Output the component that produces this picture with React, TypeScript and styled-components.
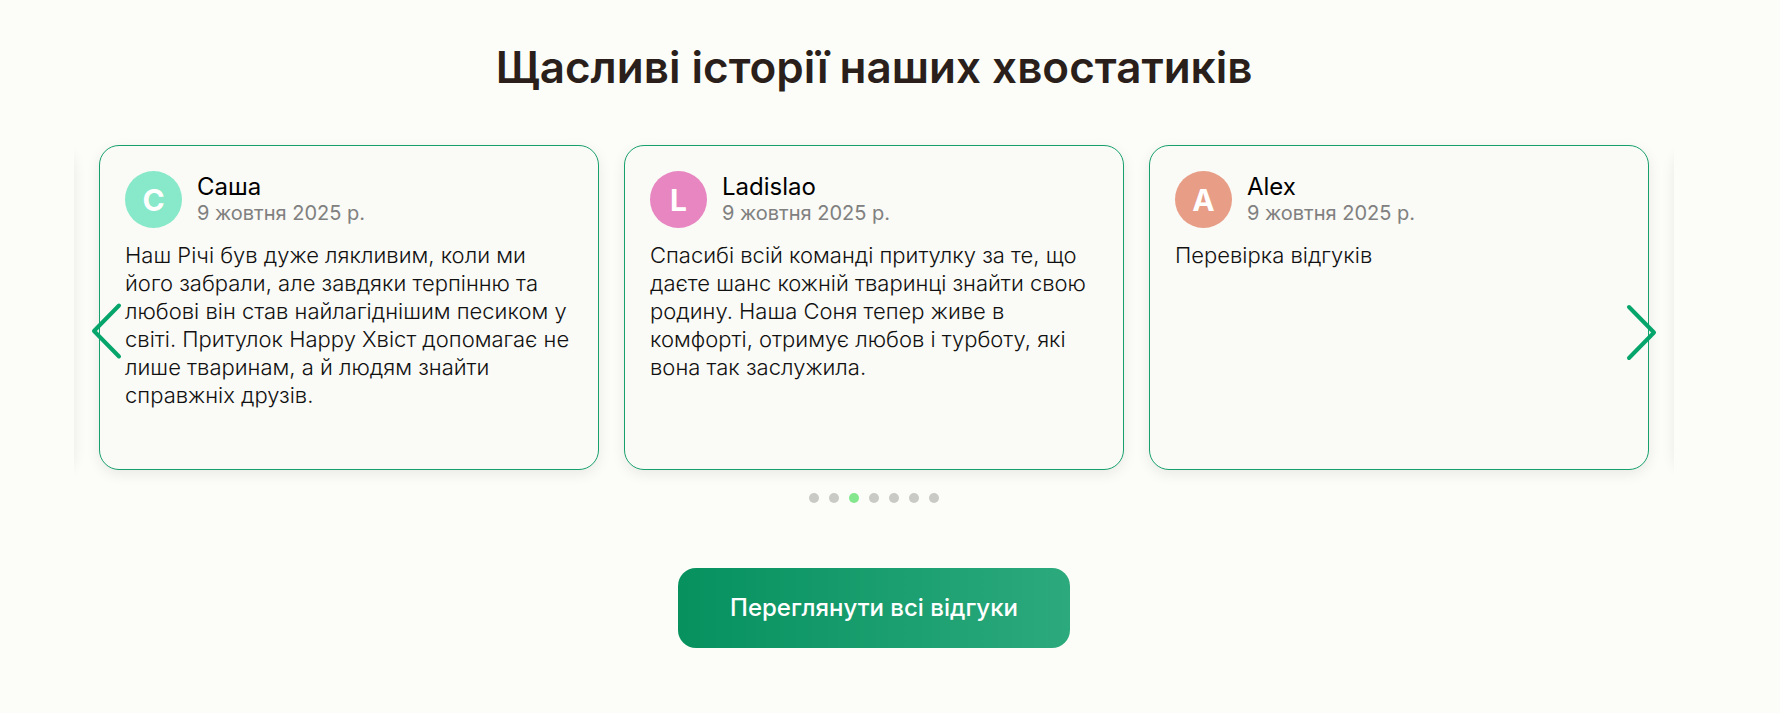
import React from "react";
import styled, { createGlobalStyle } from "styled-components";

const GlobalStyle = createGlobalStyle`
  *, *::before, *::after { box-sizing: border-box; }
  body {
    margin: 0;
    background: #fcfdf8;
    color: #000;
    font-family: Inter, "Noto Sans", sans-serif;
  }
`;

const Section = styled.section`
  display: flex;
  flex-direction: column;
  align-items: center;
  padding: 39px 106px 64px 74px;
`;

const Title = styled.h2`
  margin: 0;
  font-size: 44px;
  line-height: 56px;
  font-weight: 600;
  color: #2a1f1b;
  text-align: center;
`;

const Slider = styled.div`
  position: relative;
  width: 100%;
  max-width: 1600px;
  margin-top: 25px;
  padding-bottom: 40px;
`;

const Track = styled.ul`
  display: flex;
  justify-content: center;
  gap: 25px;
  margin: 0;
  padding: 25px 25px 23px;
  overflow: hidden;
  list-style: none;
`;

const Card = styled.li`
  flex: 0 0 calc((100% - 50px) / 3);
  min-height: 325px;
  padding: 25px;
  border: 1px solid #16a06c;
  border-radius: 20px;
  background: #fafaf6;
  box-shadow: 0 4px 14px rgba(0, 0, 0, 0.08);
`;

const Author = styled.div`
  display: flex;
  align-items: center;
  gap: 15px;
`;

const Avatar = styled.span<{ $color: string }>`
  display: flex;
  align-items: center;
  justify-content: center;
  flex: none;
  width: 57px;
  height: 57px;
  border-radius: 50%;
  background: ${(p) => p.$color};
  color: #fff;
  font-size: 30px;
  font-weight: 700;
`;

const Name = styled.h3`
  margin: 0;
  font-size: 24px;
  line-height: 28px;
  font-weight: 400;
`;

const DateText = styled.time`
  display: block;
  font-size: 20px;
  line-height: 24px;
  padding-bottom: 2px;
  color: #808080;
`;

const Story = styled.p`
  margin: 13px 0 0;
  font-size: 22px;
  line-height: 28px;
  font-weight: 300;
  color: #111;
  white-space: pre-line;
`;

const Arrow = styled.button<{ $side: "left" | "right" }>`
  position: absolute;
  top: 50%;
  ${(p) => p.$side}: 16px;
  transform: translateY(-50%);
  padding: 0;
  border: 0;
  background: none;
  cursor: pointer;

  svg { display: block; }
`;

const Dots = styled.div`
  display: flex;
  justify-content: center;
  gap: 10px;
`;

const Dot = styled.button<{ $active: boolean }>`
  width: 10px;
  height: 10px;
  padding: 0;
  border: 0;
  border-radius: 50%;
  background: ${(p) => (p.$active ? "#84e78d" : "#c9cac6")};
  cursor: pointer;
`;

const AllButton = styled.button`
  min-height: 80px;
  margin-top: 25px;
  padding: 0 52px 2px;
  border: 0;
  border-radius: 18px;
  background: linear-gradient(90deg, #06915f, #2caa7d);
  color: #fff;
  font-family: inherit;
  font-size: 24px;
  font-weight: 500;
  cursor: pointer;
`;

const reviews = [
  {
    name: "Саша",
    initial: "С",
    color: "#87e9c9",
    text: "Наш Річі був дуже лякливим, коли ми\nйого забрали, але завдяки терпінню та\nлюбові він став найлагіднішим песиком у\nсвіті. Притулок Happy Хвіст допомагає не\nлише тваринам, а й людям знайти\nсправжніх друзів.",
  },
  {
    name: "Ladislao",
    initial: "L",
    color: "#e786c1",
    text: "Спасибі всій команді притулку за те, що\nдаєте шанс кожній тваринці знайти свою\nродину. Наша Соня тепер живе в\nкомфорті, отримує любов і турботу, які\nвона так заслужила.",
  },
  {
    name: "Alex",
    initial: "A",
    color: "#e79d86",
    text: "Перевірка відгуків",
  },
];

const dots = [0, 1, 2, 3, 4, 5, 6];

export default function App() {
  const [active, setActive] = React.useState(2);
  const move = (step: number) =>
    setActive((active + step + dots.length) % dots.length);

  return (
    <>
      <GlobalStyle />
      <Section>
        <Title>Щасливі історії наших хвостатиків</Title>
        <Slider>
          <Track>
            <Card aria-hidden="true" />
            {reviews.map((r) => (
              <Card key={r.name}>
                <Author>
                  <Avatar $color={r.color}>{r.initial}</Avatar>
                  <div>
                    <Name>{r.name}</Name>
                    <DateText dateTime="2025-10-09">9 жовтня 2025 р.</DateText>
                  </div>
                </Author>
                <Story>{r.text}</Story>
              </Card>
            ))}
            <Card aria-hidden="true" />
          </Track>
          <Dots>
            {dots.map((i) => (
              <Dot key={i} type="button" $active={i === active} onClick={() => setActive(i)} />
            ))}
          </Dots>
          <Arrow type="button" $side="left" onClick={() => move(-1)}>
            <svg width="32" height="60" viewBox="0 0 32 60" fill="none" stroke="#06a56c" strokeWidth="4" strokeLinecap="round" strokeLinejoin="round">
              <path d="M29 3.5 L4 29 L29 54.5" />
            </svg>
          </Arrow>
          <Arrow type="button" $side="right" onClick={() => move(1)}>
            <svg width="32" height="60" viewBox="0 0 32 60" fill="none" stroke="#06a56c" strokeWidth="4" strokeLinecap="round" strokeLinejoin="round">
              <path d="M3 5 L28 30.5 L3 56" />
            </svg>
          </Arrow>
        </Slider>
        <AllButton type="button">Переглянути всі відгуки</AllButton>
      </Section>
    </>
  );
}
